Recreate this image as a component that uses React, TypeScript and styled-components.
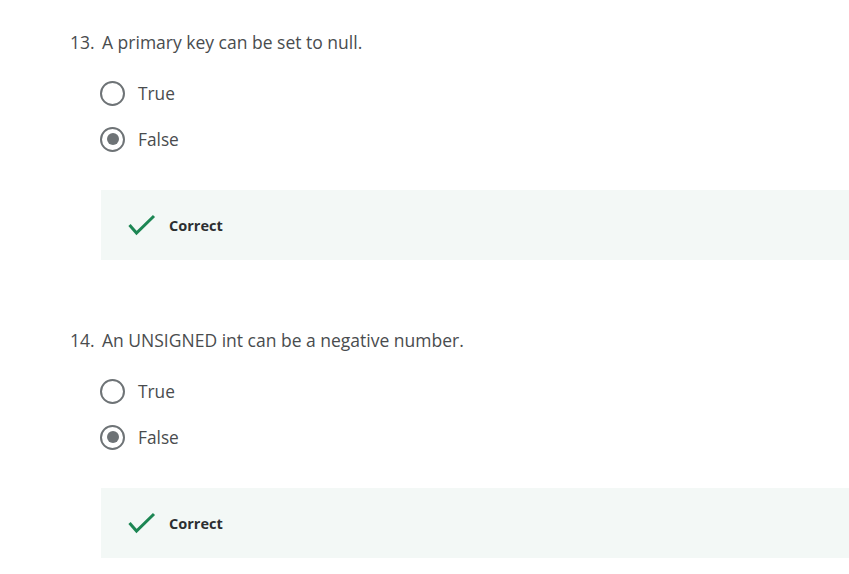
import React from "react";
import styled, { createGlobalStyle } from "styled-components";

const Global = createGlobalStyle`
  html, body { margin: 0; padding: 0; background: #ffffff; }
  body { font-family: "Open Sans", "Liberation Sans", sans-serif; color: #494c4e; }
`;

const Page = styled.div`
  padding: 30px 0 0 70px;
`;

const Question = styled.section`
  display: flex;
  flex-direction: column;
  & + & { margin-top: 68px; }
`;

const Title = styled.div`
  display: flex;
  font-size: 17.5px;
  line-height: 24px;
  height: 24px;
`;

const Num = styled.span`
  width: 32px;
  flex: none;
`;

const Options = styled.div`
  margin-top: 16px;
  padding-left: 30px;
  display: flex;
  flex-direction: column;
`;

const Option = styled.label`
  display: flex;
  align-items: center;
  height: 46px;
  gap: 13px;
  font-size: 17.3px;
`;

const Radio = styled.span<{ $checked?: boolean }>`
  box-sizing: border-box;
  width: 25px;
  height: 25px;
  border-radius: 50%;
  border: 2.5px solid #6e7376;
  display: flex;
  align-items: center;
  justify-content: center;
  background: #fff;
  &::after {
    content: "";
    display: ${(p) => (p.$checked ? "block" : "none")};
    width: 12px;
    height: 12px;
    border-radius: 50%;
    background: #6e7376;
  }
`;

const Feedback = styled.div`
  margin-top: 28px;
  margin-left: 31px;
  height: 70px;
  background: #f3f8f6;
  display: flex;
  align-items: center;
  padding-left: 27px;
  gap: 13px;
`;

const FeedbackText = styled.span`
  font-size: 14.5px;
  font-weight: 700;
  color: #2c2f31;
  padding-top: 1px;
`;

const Check = () => (
  <svg width="28" height="22" viewBox="0 0 28 22" fill="none">
    <path d="M1.5 11 L8.5 19 L26 2" stroke="#1c8653" strokeWidth="3" />
  </svg>
);

const data = [
  { n: "13.", q: "A primary key can be set to null." },
  { n: "14.", q: "An UNSIGNED int can be a negative number." },
];

export default function App() {
  return (
    <Page>
      <Global />
      {data.map((d) => (
        <Question key={d.n}>
          <Title>
            <Num>{d.n}</Num>
            <span>{d.q}</span>
          </Title>
          <Options>
            <Option>
              <Radio />
              True
            </Option>
            <Option>
              <Radio $checked />
              False
            </Option>
          </Options>
          <Feedback>
            <Check />
            <FeedbackText>Correct</FeedbackText>
          </Feedback>
        </Question>
      ))}
    </Page>
  );
}
